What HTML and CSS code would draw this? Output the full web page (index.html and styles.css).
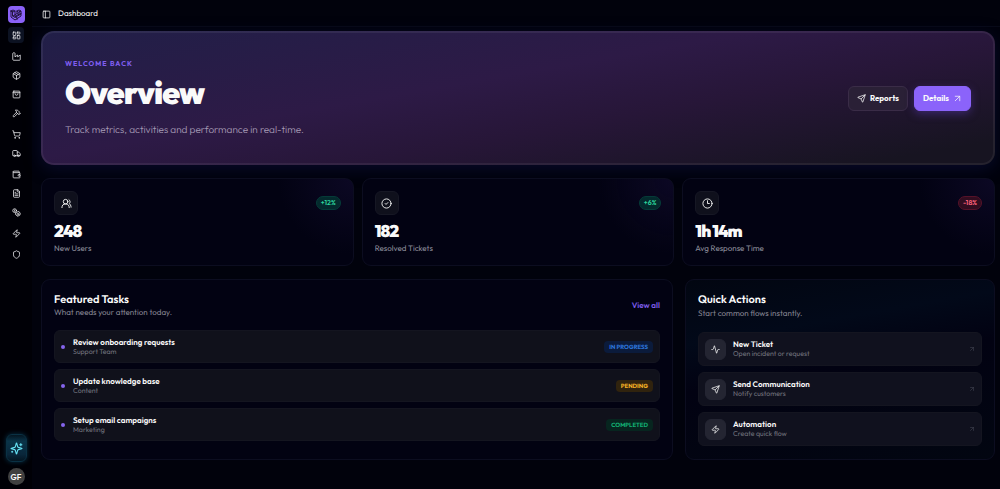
FILE: index.html
```html
<!DOCTYPE html>
<html lang="en">
<head>
<meta charset="utf-8">
<meta name="viewport" content="width=device-width, initial-scale=1">
<title>Dashboard</title>
<link rel="stylesheet" href="styles.css">
</head>
<body>
<svg class="sprite" aria-hidden="true">
  <symbol id="grid" viewBox="0 0 24 24"><rect x="3" y="3" width="7" height="9" rx="1"/><rect x="14" y="3" width="7" height="5" rx="1"/><rect x="14" y="12" width="7" height="9" rx="1"/><rect x="3" y="16" width="7" height="5" rx="1"/></symbol>
  <symbol id="factory" viewBox="0 0 24 24"><path d="M2 20a2 2 0 0 0 2 2h16a2 2 0 0 0 2-2V8l-7 5V8l-7 5V4a2 2 0 0 0-2-2H4a2 2 0 0 0-2 2Z"/></symbol>
  <symbol id="package" viewBox="0 0 24 24"><path d="M11 21.7a2 2 0 0 0 2 0l7-4a2 2 0 0 0 1-1.7V8a2 2 0 0 0-1-1.7l-7-4a2 2 0 0 0-2 0l-7 4A2 2 0 0 0 3 8v8a2 2 0 0 0 1 1.7ZM12 22V12M3.3 7 12 12l8.7-5M7.5 4.3l9 5.1"/></symbol>
  <symbol id="bag" viewBox="0 0 24 24"><rect x="3" y="3" width="18" height="18" rx="2"/><path d="M3 7h18M16 10a4 4 0 0 1-8 0"/></symbol>
  <symbol id="hammer" viewBox="0 0 24 24"><path d="m15 12-8.400 8.400a2.100 2.100 0 0 1-3-3L12 9M18 15l4-4M21.500 11.500l-1.900-1.900A2 2 0 0 1 19 8.200V7l-2.300-2.300A6 6 0 0 0 12.500 3H9l.9.800A6 6 0 0 1 12 8.400V10l2 2h1.200a2 2 0 0 1 1.400.6l1.900 1.900"/></symbol>
  <symbol id="cart" viewBox="0 0 24 24"><circle cx="8" cy="21" r="1"/><circle cx="19" cy="21" r="1"/><path d="M2 2h2l2.700 12.400a2 2 0 0 0 2 1.600h9.800a2 2 0 0 0 1.900-1.600L22 7H5.100"/></symbol>
  <symbol id="truck" viewBox="0 0 24 24"><path d="M14 18V6a2 2 0 0 0-2-2H4a2 2 0 0 0-2 2v11a1 1 0 0 0 1 1h2M15 18H9M19 18h2a1 1 0 0 0 1-1v-3.700a1 1 0 0 0-.2-.6l-3.500-4.300a1 1 0 0 0-.8-.4H14"/><circle cx="17" cy="18" r="2"/><circle cx="7" cy="18" r="2"/></symbol>
  <symbol id="wallet" viewBox="0 0 24 24"><path d="M19 7V4a1 1 0 0 0-1-1H5a2 2 0 0 0 0 4h15a1 1 0 0 1 1 1v4h-3a2 2 0 0 0 0 4h3a1 1 0 0 0 1-1v-2a1 1 0 0 0-1-1M3 5v14a2 2 0 0 0 2 2h15a1 1 0 0 0 1-1v-4"/></symbol>
  <symbol id="file" viewBox="0 0 24 24"><path d="M15 2H6a2 2 0 0 0-2 2v16a2 2 0 0 0 2 2h12a2 2 0 0 0 2-2V7ZM14 2v4a2 2 0 0 0 2 2h4M10 9H8M16 13H8M16 17H8"/></symbol>
  <symbol id="coins" viewBox="0 0 24 24"><circle cx="7" cy="7" r="5"/><path d="M7 5v4M11 12l7-3 4 5-1 5-6 3-5-4ZM13 16l5-2M14 19l5-2"/></symbol>
  <symbol id="zap" viewBox="0 0 24 24"><path d="M4 14a1 1 0 0 1-.8-1.600l9.900-10.200a.5.5 0 0 1 .9.500l-1.900 6A1 1 0 0 0 13 10h7a1 1 0 0 1 .8 1.600l-9.900 10.200a.5.5 0 0 1-.9-.5l1.900-6A1 1 0 0 0 11 14Z"/></symbol>
  <symbol id="shield" viewBox="0 0 24 24"><path d="M20 13c0 5-3.500 7.500-8 9-4.500-1.500-8-4-8-9V6a1 1 0 0 1 1-1c2 0 4.500-1.200 6.200-2.700a1.200 1.200 0 0 1 1.600 0C14.500 3.800 17 5 19 5a1 1 0 0 1 1 1Z"/></symbol>
  <symbol id="panel" viewBox="0 0 24 24"><rect x="3" y="3" width="18" height="18" rx="2"/><path d="M9 3v18"/></symbol>
  <symbol id="sparkles" viewBox="0 0 24 24"><path d="M9.900 15.500A2 2 0 0 0 8.500 14.100L2.400 12.500a.5.500 0 0 1 0-1L8.500 9.900A2 2 0 0 0 9.900 8.500l1.600-6.100a.5.500 0 0 1 1 0l1.600 6.100a2 2 0 0 0 1.400 1.400l6.100 1.600a.5.500 0 0 1 0 1l-6.100 1.600a2 2 0 0 0-1.400 1.400l-1.600 6.100a.5.500 0 0 1-1 0ZM20 3v4M22 5h-4M4 17v2M5 18H3"/></symbol>
  <symbol id="send" viewBox="0 0 24 24"><path d="M14.500 21.700a.5.500 0 0 0 .9 0l6.500-19a.5.500 0 0 0-.6-.6l-19 6.500a.5.500 0 0 0 0 .9l7.900 3.200a2 2 0 0 1 1.100 1.100ZM21.900 2.100 10.900 13.100"/></symbol>
  <symbol id="arrow" viewBox="0 0 24 24"><path d="M6 6h12v12M6 18 18 6"/></symbol>
  <symbol id="users" viewBox="0 0 24 24"><path d="M18 21a8 8 0 0 0-16 0"/><circle cx="10" cy="8" r="5"/><path d="M22 20c0-3.400-2-6.500-4-8a5 5 0 0 0-.5-8.300"/></symbol>
  <symbol id="check" viewBox="0 0 24 24"><circle cx="12" cy="12" r="10"/><path d="m9 12 2 2 4-4"/></symbol>
  <symbol id="clock" viewBox="0 0 24 24"><circle cx="12" cy="12" r="10"/><path d="M12 6v6h4"/></symbol>
  <symbol id="activity" viewBox="0 0 24 24"><path d="M22 12h-2.500a2 2 0 0 0-1.900 1.500l-2.400 8.300a.3.300 0 0 1-.5 0L9.300 2.200a.3.300 0 0 0-.5 0l-2.400 8.300A2 2 0 0 1 4.500 12H2"/></symbol>
  <symbol id="brand" viewBox="0 0 24 24"><path d="m2 4 4-2 4 2v11l8-4.500V6l4-2 0 6-12 7-5-3V6ZM2 4v12l8 6 12-8v-4M2 4l4 2 4-2M14 4l4-2 4 2-4 2ZM14 4v5l4 2 4-2M10 15l4 2v4M6 14l8-5"/></symbol>
</svg>

<div class="app">
  <aside class="sidebar">
    <a class="logo" href="#" aria-label="Home"><svg class="icon icon-brand"><use href="#brand"/></svg></a>
    <nav class="nav" aria-label="Main">
      <div class="nav-group"><a class="nav-item active" href="#" aria-label="Dashboard"><svg class="icon"><use href="#grid"/></svg></a></div>
      <div class="nav-group">
        <a class="nav-item" href="#" aria-label="Production"><svg class="icon"><use href="#factory"/></svg></a>
        <a class="nav-item" href="#" aria-label="Products"><svg class="icon"><use href="#package"/></svg></a>
        <a class="nav-item" href="#" aria-label="Orders"><svg class="icon"><use href="#bag"/></svg></a>
        <a class="nav-item" href="#" aria-label="Tools"><svg class="icon"><use href="#hammer"/></svg></a>
      </div>
      <div class="nav-group">
        <a class="nav-item" href="#" aria-label="Purchases"><svg class="icon"><use href="#cart"/></svg></a>
        <a class="nav-item" href="#" aria-label="Shipping"><svg class="icon"><use href="#truck"/></svg></a>
      </div>
      <div class="nav-group">
        <a class="nav-item" href="#" aria-label="Wallet"><svg class="icon"><use href="#wallet"/></svg></a>
        <a class="nav-item" href="#" aria-label="Invoices"><svg class="icon"><use href="#file"/></svg></a>
        <a class="nav-item" href="#" aria-label="Payments"><svg class="icon"><use href="#coins"/></svg></a>
      </div>
      <div class="nav-group"><a class="nav-item" href="#" aria-label="Automation"><svg class="icon"><use href="#zap"/></svg></a></div>
      <div class="nav-group"><a class="nav-item" href="#" aria-label="Security"><svg class="icon"><use href="#shield"/></svg></a></div>
    </nav>
    <button class="assistant" type="button" aria-label="Assistant"><svg class="icon icon-lg"><use href="#sparkles"/></svg></button>
    <button class="avatar" type="button">GF</button>
  </aside>

  <div class="page">
    <header class="topbar">
      <button class="toggle" type="button" aria-label="Toggle sidebar"><svg class="icon"><use href="#panel"/></svg></button>
      <span>Dashboard</span>
    </header>

    <main class="content">
      <section class="hero">
        <div class="hero-text">
          <p class="eyebrow">WELCOME BACK</p>
          <h1>Overview</h1>
          <p class="lead">Track metrics, activities and performance in real-time.</p>
        </div>
        <div class="hero-actions">
          <button class="btn" type="button"><svg class="icon"><use href="#send"/></svg>Reports</button>
          <button class="btn btn-primary" type="button">Details<svg class="icon"><use href="#arrow"/></svg></button>
        </div>
      </section>

      <section class="stats">
        <article class="card stat">
          <div class="stat-top"><span class="tile"><svg class="icon icon-md"><use href="#users"/></svg></span><span class="delta up">+12%</span></div>
          <p class="value">248</p><p class="label">New Users</p>
        </article>
        <article class="card stat">
          <div class="stat-top"><span class="tile"><svg class="icon icon-md"><use href="#check"/></svg></span><span class="delta up">+6%</span></div>
          <p class="value">182</p><p class="label">Resolved Tickets</p>
        </article>
        <article class="card stat">
          <div class="stat-top"><span class="tile"><svg class="icon icon-md"><use href="#clock"/></svg></span><span class="delta down">-18%</span></div>
          <p class="value">1h 14m</p><p class="label">Avg Response Time</p>
        </article>
      </section>

      <div class="panels">
        <section class="card panel">
          <div class="panel-head">
            <div><h2>Featured Tasks</h2><p class="panel-sub">What needs your attention today.</p></div>
            <a class="view-all" href="#">View all</a>
          </div>
          <ul class="list tasks">
            <li class="row task"><span class="dot"></span><div class="row-text"><h3>Review onboarding requests</h3><p>Support Team</p></div><span class="status progress">IN PROGRESS</span></li>
            <li class="row task"><span class="dot"></span><div class="row-text"><h3>Update knowledge base</h3><p>Content</p></div><span class="status pending">PENDING</span></li>
            <li class="row task"><span class="dot"></span><div class="row-text"><h3>Setup email campaigns</h3><p>Marketing</p></div><span class="status completed">COMPLETED</span></li>
          </ul>
        </section>

        <section class="card panel quick">
          <h2>Quick Actions</h2>
          <p class="panel-sub">Start common flows instantly.</p>
          <div class="list actions">
            <a class="row action" href="#"><span class="tile tile-sm"><svg class="icon"><use href="#activity"/></svg></span><div class="row-text"><h3>New Ticket</h3><p>Open incident or request</p></div><svg class="icon icon-xs"><use href="#arrow"/></svg></a>
            <a class="row action" href="#"><span class="tile tile-sm"><svg class="icon"><use href="#send"/></svg></span><div class="row-text"><h3>Send Communication</h3><p>Notify customers</p></div><svg class="icon icon-xs"><use href="#arrow"/></svg></a>
            <a class="row action" href="#"><span class="tile tile-sm"><svg class="icon"><use href="#zap"/></svg></span><div class="row-text"><h3>Automation</h3><p>Create quick flow</p></div><svg class="icon icon-xs"><use href="#arrow"/></svg></a>
          </div>
        </section>
      </div>
    </main>
  </div>
</div>
</body>
</html>
```

FILE: styles.css
```css
* { box-sizing: border-box; margin: 0; padding: 0; }

body {
  background: #01020c;
  color: #fafafa;
  font: 8px/10px Outfit, Lato, "Open Sans", sans-serif;
  text-rendering: geometricPrecision;
}

a { color: inherit; text-decoration: none; }
button { border: 0; background: none; color: inherit; font: inherit; cursor: pointer; }
ul { list-style: none; }

.sprite { position: absolute; width: 0; height: 0; }

.icon {
  flex: none;
  width: 9px;
  height: 9px;
  fill: none;
  stroke: currentColor;
  stroke-width: 2;
  stroke-linecap: round;
  stroke-linejoin: round;
}
.icon-md { width: 11px; height: 11px; }
.icon-lg { width: 13px; height: 13px; }
.icon-xs { width: 6px; height: 6px; color: #4b4c5b; }
.icon-brand { width: 12px; height: 12px; color: #22143f; }

.app { display: flex; min-height: 100vh; }

.sidebar {
  display: flex;
  flex-direction: column;
  align-items: center;
  flex: none;
  width: 32px;
  padding: 6px 0 4px;
  background: #000006;
}
.logo {
  display: grid;
  place-items: center;
  width: 17px;
  height: 17px;
  border-radius: 4px;
  background: #8b62f8;
}
.nav { display: flex; flex-direction: column; gap: 5px; margin-top: 4px; }
.nav-group { display: flex; flex-direction: column; gap: 3px; }
.nav-item {
  display: grid;
  place-items: center;
  width: 16px;
  height: 16px;
  border-radius: 4px;
  color: #f4f4f8;
}
.nav-item.active { background: #0c1222; }

.assistant {
  display: grid;
  place-items: center;
  width: 21px;
  height: 28px;
  margin-top: auto;
  border: 1px solid #0a3144;
  border-radius: 6px;
  background: linear-gradient(#041521, #0a3449 24%, #09263a 75%, #041521);
  box-shadow: 0 0 5px #073047;
  color: #67e3f5;
}
.avatar {
  width: 17px;
  height: 17px;
  margin-top: 6px;
  border-radius: 50%;
  background: #404040;
  font-weight: 600;
}

.page { flex: 1; min-width: 0; }
.topbar {
  display: flex;
  align-items: center;
  gap: 7px;
  height: 27px;
  padding: 2px 10px 0;
  border-bottom: 1px solid #080a18;
}
.toggle { display: grid; place-items: center; }

.content {
  display: flex;
  flex-direction: column;
  gap: 13px;
  padding: 4px 5px 8px 9px;
}

.hero {
  display: flex;
  align-items: center;
  justify-content: space-between;
  padding: 26px 22px;
  border: 2px solid #ffffff10;
  border-radius: 13px;
  background: linear-gradient(170deg, #211f48 0%, #2d1a46 42%, #271638 62%, #171421 92%) border-box;
  box-shadow: 0 4px 16px #080a2a;
}
.eyebrow { color: #7f5df0; font-size: 7px; font-weight: 700; letter-spacing: 1px; }
.hero h1 { margin-top: 6px; font-size: 32px; line-height: 36px; font-weight: 900; letter-spacing: -1px; }
.lead { margin-top: 12px; color: #a79cb6; font-size: 10px; line-height: 14px; font-weight: 300; }
.hero-actions { display: flex; gap: 6px; }
.btn {
  display: flex;
  align-items: center;
  justify-content: center;
  gap: 4px;
  height: 25px;
  padding: 0 8px;
  border: 1px solid #3a2c47;
  border-radius: 6px;
  background: #2a2036;
  font-weight: 700;
}
.btn-primary { border-color: #8b63fa; background: #8b63fa; box-shadow: 0 3px 8px #5036a088; }

.card { border: 1px solid #0c0d20; border-radius: 9px; background: #020212; }
.stats { display: grid; grid-template-columns: repeat(3, minmax(0, 1fr)); gap: 8px; }
.stat {
  padding: 12px 12px 11px;
  background: radial-gradient(circle at 100% 0, #0c0824, transparent 75px), #020212;
}
.stat-top { display: flex; align-items: center; justify-content: space-between; }
.tile {
  display: grid;
  place-items: center;
  flex: none;
  width: 24px;
  height: 24px;
  border: 1px solid #161724;
  border-radius: 6px;
  background: #0f101c;
}
.tile-sm { width: 21px; height: 21px; border-color: #242533; background: #242532; }
.delta { padding: 1px 4px; border: 1px solid; border-radius: 8px; font-size: 7px; font-weight: 600; }
.up { border-color: #053b38; background: #042a2d; color: #2dd49c; }
.down { border-color: #551229; background: #310d20; color: #ff627c; }
.value { margin-top: 7px; font-size: 17px; line-height: 20px; font-weight: 900; letter-spacing: -1px; }
.label { margin-top: 2px; color: #8d8e9b; }

.panels { display: grid; grid-template-columns: minmax(0, 632fr) minmax(0, 310fr); gap: 12px; }
.panel { padding: 12px 12px 18px; }
.panel-head { display: flex; align-items: center; justify-content: space-between; }
h2 { font-size: 11px; line-height: 14px; font-weight: 600; }
.panel-sub { margin-top: 1px; line-height: 12px; color: #868693; }
.view-all { color: #7b5be8; font-weight: 600; }
.list { display: flex; flex-direction: column; gap: 6px; }
.tasks { margin-top: 11px; }
.row {
  display: flex;
  align-items: center;
  min-height: 33px;
  padding: 0 6px;
  border: 1px solid #141520;
  border-radius: 6px;
  background: #10111b;
}
.row-text { flex: 1; min-width: 0; }
.row h3 { font-size: 8px; line-height: 10px; font-weight: 600; }
.row p { font-size: 7px; line-height: 8px; color: #74757f; }
.dot { width: 4px; height: 4px; margin-right: 8px; border-radius: 50%; background: #8565ed; }
.status { padding: 1px 5px; border-radius: 4px; font-size: 6px; font-weight: 700; }
.progress { background: #0b1b3b; color: #2c75dc; }
.pending { background: #30230e; color: #f4b225; }
.completed { background: #07251f; color: #12ae72; }

.quick { padding-bottom: 12px; background: linear-gradient(170deg, #020611, #020919 28%, #020212 48%, #020611); }
.quick .panel-sub { margin-top: 2px; }
.actions { margin-top: 12px; }
.action { min-height: 34px; background: #10111e; }
.action .tile { margin-right: 7px; }
```
